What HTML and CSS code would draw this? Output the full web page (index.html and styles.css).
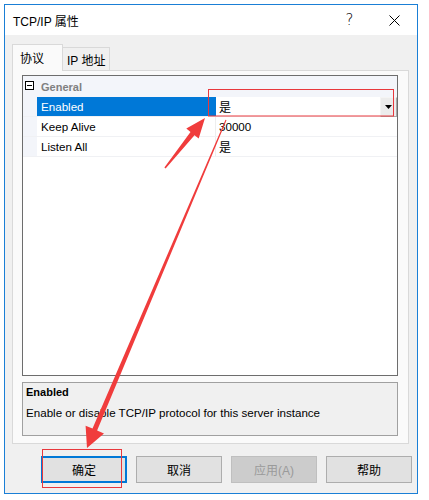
FILE: index.html
```html
<!DOCTYPE html>
<html>
<head>
<meta charset="utf-8">
<link rel="stylesheet" href="styles.css">
</head>
<body>
<div class="window">
  <div class="titlebar">
    <span class="title">TCP/IP 属性</span>
    <span class="tb-btn help">?</span>
    <span class="tb-btn close"><svg width="11" height="11" viewBox="0 0 11 11"><path d="M0.5 0.5 L10.5 10.5 M10.5 0.5 L0.5 10.5" stroke="#000" stroke-width="1" fill="none"/></svg></span>
  </div>
  <div class="content">
    <div class="tabs">
      <div class="tab active">协议</div>
      <div class="tab">IP 地址</div>
    </div>
    <div class="panel">
      <div class="grid">
        <div class="cat">
          <svg class="toggle" width="9" height="9" viewBox="0 0 9 9"><rect x="0.5" y="0.5" width="8" height="8" fill="#fff" stroke="#000"/><path d="M2 4.5 H7" stroke="#000"/></svg>
          <span class="cat-label">General</span>
        </div>
        <div class="prop sel">
          <span class="margin"></span>
          <span class="name">Enabled</span>
          <span class="value"><span class="cjk">是</span>
            <span class="dd"><svg width="7" height="4" viewBox="0 0 7 4"><path d="M0 0 H7 L3.5 4 Z" fill="#000"/></svg></span>
          </span>
        </div>
        <div class="prop">
          <span class="margin"></span>
          <span class="name">Keep Alive</span>
          <span class="value">30000</span>
        </div>
        <div class="prop">
          <span class="margin"></span>
          <span class="name">Listen All</span>
          <span class="value"><span class="cjk">是</span></span>
        </div>
      </div>
      <div class="desc">
        <div class="desc-title">Enabled</div>
        <div class="desc-text">Enable or disable TCP/IP protocol for this server instance</div>
      </div>
    </div>
    <div class="buttons">
      <div class="btn default">确定</div>
      <div class="btn">取消</div>
      <div class="btn disabled">应用(A)</div>
      <div class="btn">帮助</div>
    </div>
  </div>
</div>
<svg class="annot" width="429" height="500" viewBox="0 0 429 500">
  <rect x="208.5" y="89.5" width="185" height="26.5" fill="none" stroke="#e8383d" stroke-width="1"/>
  <rect x="42.5" y="449.5" width="79" height="38" fill="none" stroke="#e8383d" stroke-width="1"/>
  <polygon points="165.6,168.5 194.5,135.2 198.7,138.6 205,118 186.3,128.6 190.5,132.0 164.4,167.5" fill="#f03c3c"/>
  <polygon points="226.5,120.2 97.1,430.6 104.0,433.5 87,448 85.6,425.7 92.5,428.6 225.5,119.8" fill="#f03c3c"/>
</svg>
</body>
</html>
```

FILE: styles.css
```css
body {
  margin: 0;
  background: #ffffff;
  font-family: "Liberation Sans", "Noto Sans CJK SC", sans-serif;
  color: #000;
  position: relative;
}

.window {
  margin: 4px 0 0 4px;
  width: 412px;
  height: 488px;
  border: 1px solid #1a7fd6;
  background: #f0f0f0;
  display: flex;
  flex-direction: column;
}

.titlebar {
  height: 30px;
  background: #ffffff;
  display: flex;
  align-items: center;
  padding-left: 8px;
  font-size: 12px;
}

.title {
  flex: 1;
}

.tb-btn {
  width: 45px;
  height: 30px;
  display: flex;
  align-items: center;
  justify-content: center;
}

.help {
  font-size: 15px;
  font-family: "DejaVu Sans", sans-serif;
  font-weight: 300;
}

.content {
  padding: 9px 8px 0 7px;
  display: flex;
  flex-direction: column;
}

.tabs {
  display: flex;
  align-items: flex-end;
  height: 26px;
  position: relative;
  z-index: 1;
}

.tab {
  box-sizing: border-box;
  height: 23px;
  width: 47px;
  border: 1px solid #d9d9d9;
  border-left: none;
  border-bottom: none;
  background: #f0f0f0;
  font-size: 12px;
  display: flex;
  align-items: center;
  padding-left: 4px;
}

.tab.active {
  height: 27px;
  width: 51px;
  margin-bottom: -1px;
  border-left: 1px solid #d9d9d9;
  background: #fafafa;
  padding-left: 7px;
  padding-bottom: 2px;
}

.panel {
  box-sizing: border-box;
  height: 374px;
  border: 1px solid #d9d9d9;
  background: #fafafa;
  padding: 4px 10px 7px 9px;
  display: flex;
  flex-direction: column;
  gap: 6px;
}

.grid {
  height: 299px;
  border: 1px solid #6d6d6d;
  background: #ffffff;
  font-size: 11.6px;
}

.cat {
  height: 21px;
  background: #f3f5fa;
  display: flex;
  align-items: center;
}

.toggle {
  margin-left: 2px;
  margin-top: -2px;
}

.cat-label {
  margin-left: 7px;
  font-weight: bold;
  font-size: 11px;
  color: #808080;
}

.prop {
  box-sizing: border-box;
  height: 20px;
  display: flex;
  border-bottom: 1px solid #f0f1f4;
}

.margin {
  width: 14px;
  background: #f3f5fa;
}

.name {
  box-sizing: border-box;
  width: 179px;
  padding-left: 4px;
  border-right: 1px solid #eeeeee;
  display: flex;
  align-items: center;
}

.prop.sel .name {
  background: #0078d7;
  border-right-color: #0078d7;
  color: #ffffff;
}

.value {
  flex: 1;
  padding-left: 3px;
  display: flex;
  align-items: center;
}

.cjk {
  font-size: 12px;
}

.dd {
  margin-left: auto;
  align-self: stretch;
  box-sizing: border-box;
  width: 17px;
  height: 20px;
  background: #ececec;
  border: 1px solid #a9a9a9;
  border-top-color: #f4f4f4;
  border-left-color: #f4f4f4;
  display: flex;
  align-items: center;
  justify-content: center;
}

.desc {
  box-sizing: border-box;
  height: 54px;
  border: 1px solid #a0a0a0;
  background: #f0f0f0;
  padding: 1px 3px 0;
  font-size: 11.6px;
}

.desc-title {
  font-weight: bold;
  font-size: 11px;
  line-height: 17px;
}

.desc-text {
  margin-top: 3px;
  line-height: 17px;
}

.buttons {
  display: flex;
  justify-content: flex-end;
  gap: 9px;
  margin-top: 12px;
  margin-right: -3px;
}

.btn {
  box-sizing: border-box;
  width: 86px;
  height: 27px;
  border: 1px solid #adadad;
  background: #e1e1e1;
  font-size: 12px;
  display: flex;
  align-items: center;
  justify-content: center;
}

.btn.default {
  border: 2px solid #0078d7;
}

.btn.disabled {
  background: #cccccc;
  border-color: #bfbfbf;
  color: #9a9a9a;
}

.annot {
  position: absolute;
  left: 0;
  top: 0;
  pointer-events: none;
}
```
